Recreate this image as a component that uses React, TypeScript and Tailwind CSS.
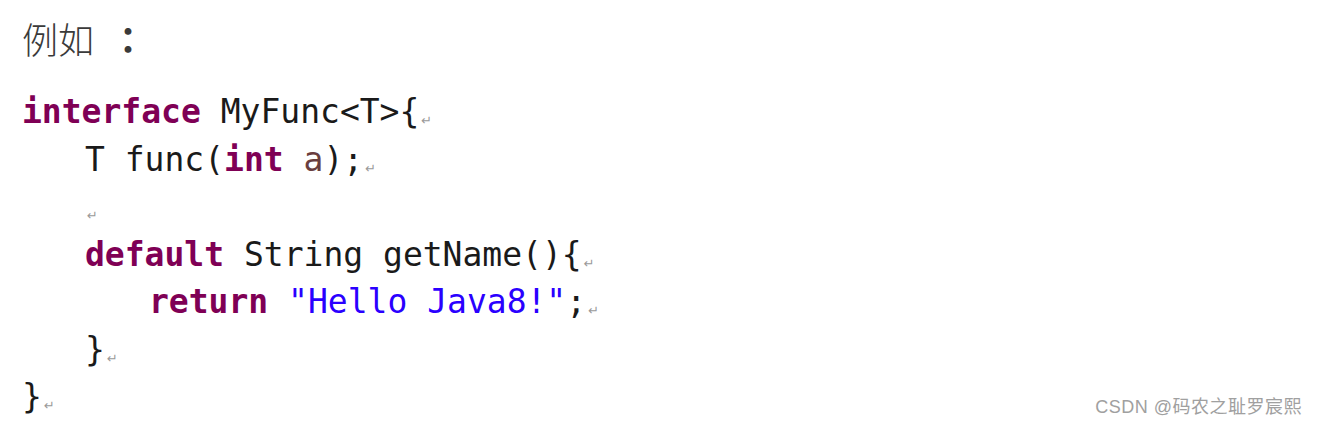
import React from 'react';

// ---------------------------------------------------------------------------
// Code sample: interface with default method
// ---------------------------------------------------------------------------

type Tok = { t: string; c?: 'kw' | 'str' | 'var' };

const lines: { indent: number; toks: Tok[] }[] = [
  { indent: 0, toks: [{ t: 'interface', c: 'kw' }, { t: ' MyFunc<T>{' }] },
  { indent: 1, toks: [{ t: 'T func(' }, { t: 'int', c: 'kw' }, { t: ' ' }, { t: 'a', c: 'var' }, { t: ');' }] },
  { indent: 1, toks: [] },
  { indent: 1, toks: [{ t: 'default', c: 'kw' }, { t: ' String getName(){' }] },
  { indent: 2, toks: [{ t: 'return', c: 'kw' }, { t: ' ' }, { t: '"Hello Java8!"', c: 'str' }, { t: ';' }] },
  { indent: 1, toks: [{ t: '}' }] },
  { indent: 0, toks: [{ t: '}' }] },
];

function tokClass(c?: Tok['c']) {
  if (c === 'kw') return 'font-bold text-[#7f0055]';
  if (c === 'str') return 'text-[#2a00ff]';
  if (c === 'var') return 'text-[#6a3e3e]';
  return 'text-[#1a1a1a]';
}

function ReturnMark() {
  return (
    <span className="ml-[2px] inline-block align-[-2px] font-['DejaVu_Sans',sans-serif] text-[13px] font-normal leading-none text-[#9a9a9a]">
      ↵
    </span>
  );
}

export default function App() {
  return (
    <div className="relative h-[429px] w-[1319px] overflow-hidden bg-white pl-[22px]">
      {/* Title */}
      <div className="pt-[14px] font-['Noto_Sans_CJK_SC',sans-serif] text-[36px] font-light leading-[48px] text-[#3a3a3a]">
        例如<span className="ml-[16px] font-['Noto_Sans_CJK_TC',sans-serif] font-bold">：</span>
      </div>

      {/* Code */}
      <div className="mt-[26px] font-['DejaVu_Sans_Mono','Liberation_Mono',monospace] text-[33px] leading-[47.5px] whitespace-pre">
        {lines.map((ln, i) => (
          <div
            key={i}
            className={ln.indent === 0 ? '' : ln.indent === 1 ? 'pl-[63px]' : 'pl-[127px]'}
          >
            {ln.toks.map((tk, j) => (
              <span key={j} className={tokClass(tk.c)}>
                {tk.t}
              </span>
            ))}
            <ReturnMark />
          </div>
        ))}
      </div>

      {/* Watermark */}
      <div className="absolute bottom-[8px] right-[17px] font-['Liberation_Sans','Noto_Sans_CJK_SC',sans-serif] text-[18px] tracking-[0.5px] text-[#a0a0a0]">
        CSDN @码农之耻罗宸熙
      </div>
    </div>
  );
}
